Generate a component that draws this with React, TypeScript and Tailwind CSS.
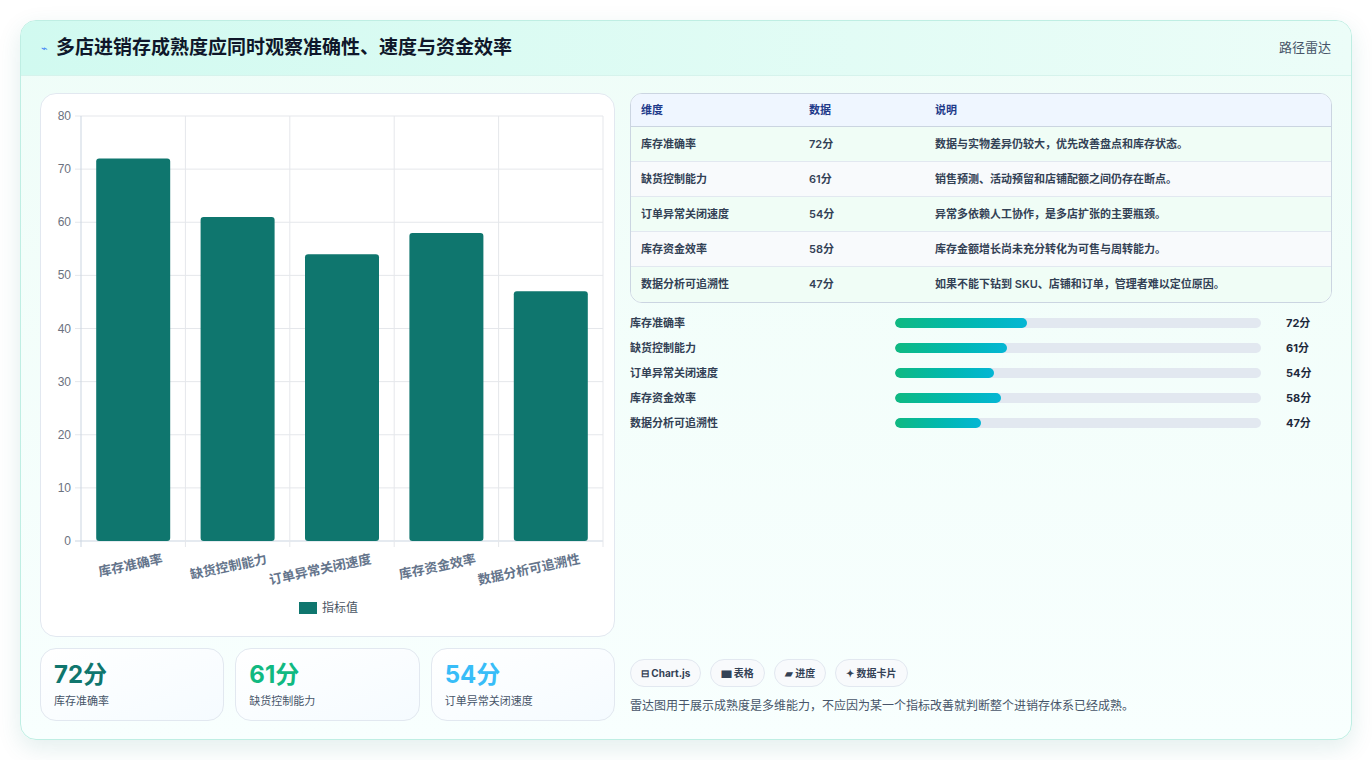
import React from "react";

const data = [
  { n: "库存准确率", v: 72, d: "数据与实物差异仍较大，优先改善盘点和库存状态。" },
  { n: "缺货控制能力", v: 61, d: "销售预测、活动预留和店铺配额之间仍存在断点。" },
  { n: "订单异常关闭速度", v: 54, d: "异常多依赖人工协作，是多店扩张的主要瓶颈。" },
  { n: "库存资金效率", v: 58, d: "库存金额增长尚未充分转化为可售与周转能力。" },
  { n: "数据分析可追溯性", v: 47, d: "如果不能下钻到 SKU、店铺和订单，管理者难以定位原因。" },
];

function Chart() {
  // svg coords relative to card at (40,93); width 574 height 543
  const x0 = 40, x1 = 562, y0 = 447, yTop = 22;
  const h = y0 - yTop;
  const slot = (x1 - x0) / 5;
  return (
    <svg width="574" height="543" className="block">
      {[0, 10, 20, 30, 40, 50, 60, 70, 80].map((t) => {
        const y = y0 - (t / 80) * h;
        return (
          <g key={t}>
            <line x1={x0 - 6} x2={x1} y1={y} y2={y} stroke={t === 0 ? "#cbd5e1" : "#e5e7eb"} />
            <text x={x0 - 10} y={y + 4} textAnchor="end" fontSize="12" fill="#6b7280" fontFamily="Liberation Sans, sans-serif">{t}</text>
          </g>
        );
      })}
      {[0, 1, 2, 3, 4, 5].map((i) => (
        <line key={i} x1={x0 + i * slot} x2={x0 + i * slot} y1={yTop} y2={y0 + 6} stroke={i === 0 ? "#cbd5e1" : "#e5e7eb"} />
      ))}
      {data.map((d, i) => {
        const bh = (d.v / 80) * h;
        const cx = x0 + i * slot + slot / 2;
        return (
          <g key={d.n}>
            <rect x={cx - 37} y={y0 - bh} width={74} height={bh} rx={3} fill="#0f766e" />
            <text transform={`translate(${cx + 30},${y0 + 22}) rotate(-12)`} textAnchor="end" fontSize="13" fontWeight="bold" fill="#64748b" fontFamily="Noto Sans CJK SC, sans-serif">{d.n}</text>
          </g>
        );
      })}
      <rect x={258} y={508} width={18} height={12} fill="#0f766e" />
      <text x={281} y={518} fontSize="12" fill="#4b5563" fontFamily="Noto Sans CJK SC, sans-serif">指标值</text>
    </svg>
  );
}

export default function App() {
  return (
    <div className="w-[1372px] h-[760px] bg-white p-5 pb-5" style={{ fontFamily: "Inter, 'Noto Sans CJK SC', sans-serif" }}>
      <div className="w-[1332px] h-[720px] rounded-2xl border border-[#bfeee3] shadow-[0_8px_24px_rgba(15,118,110,0.12)] overflow-hidden flex flex-col bg-gradient-to-b from-[#effdf8] to-[#f8fffe]">
        <div className="h-[55px] shrink-0 flex items-center justify-between px-5 bg-gradient-to-r from-[#d1faf0] to-[#ecfdf8] border-b border-[#d6f3ec]">
          <div className="flex items-center gap-2">
            <span className="text-[#3b82f6] text-[11px]">⌁</span>
            <span className="text-[19px] font-bold text-[#0f172a]">多店进销存成熟度应同时观察准确性、速度与资金效率</span>
          </div>
          <span className="text-[13px] text-[#475569]">路径雷达</span>
        </div>
        <div className="flex gap-[15px] px-[19px] pt-[17px]">
          <div className="w-[575px] flex flex-col gap-[11px]">
            <div className="h-[544px] rounded-2xl border border-[#e2e8f0] bg-white overflow-hidden">
              <Chart />
            </div>
            <div className="grid grid-cols-3 gap-[11px]">
              {[
                ["72分", "库存准确率", "text-[#0f766e]"],
                ["61分", "缺货控制能力", "text-[#10b981]"],
                ["54分", "订单异常关闭速度", "text-[#38bdf8]"],
              ].map(([v, l, c]) => (
                <div key={l} className="h-[73px] rounded-2xl border border-[#e2e8f0] bg-gradient-to-br from-white to-[#f5fbff] px-[13px] pt-[10px]">
                  <div className={`text-[24px] font-bold leading-[32px] ${c}`}>{v}</div>
                  <div className="text-[11px] text-[#475569] mt-[2px]">{l}</div>
                </div>
              ))}
            </div>
          </div>
          <div className="w-[704px] flex flex-col">
            <div className="rounded-xl border border-[#cbd5e1] overflow-hidden bg-white">
              <div className="grid grid-cols-[168px_126px_1fr] h-[33px] items-center bg-[#eff6ff] border-b border-[#cbd5e1] px-[10px] text-[11px] font-bold text-[#1e3a8a]">
                <span>维度</span><span>数据</span><span>说明</span>
              </div>
              {data.map((d, i) => (
                <div key={d.n} className={`grid grid-cols-[168px_126px_1fr] h-[35px] items-center px-[10px] text-[11px] font-semibold text-[#334155] ${i < 4 ? "border-b border-[#e2e8f0]" : ""} ${i % 2 === 0 ? "bg-[#f0fdf6]" : "bg-[#f8fafc]"}`}>
                  <span>{d.n}</span><span>{d.v}分</span><span>{d.d}</span>
                </div>
              ))}
            </div>
            <div className="flex flex-col gap-[9px] mt-[12px]">
              {data.map((d) => (
                <div key={d.n} className="flex items-center h-[16px] text-[11px] font-semibold text-[#334155]">
                  <span className="w-[265px]">{d.n}</span>
                  <div className="w-[366px] h-[10px] rounded-full bg-[#e2e8f0] overflow-hidden">
                    <div className="h-full rounded-full bg-gradient-to-r from-[#10b981] to-[#06b6d4]" style={{ width: `${d.v / 2}%` }} />
                  </div>
                  <span className="ml-[25px] font-bold text-[#1e293b]">{d.v}分</span>
                </div>
              ))}
            </div>
            <div className="flex gap-[9px] mt-[228px]">
              {["⊟ Chart.js", "▆ 表格", "▰ 进度", "✦ 数据卡片"].map((t) => (
                <span key={t} className="h-[28px] px-[10px] rounded-full border border-[#e2e8f0] bg-[#f8fafc] flex items-center text-[10px] font-bold text-[#334155]">{t}</span>
              ))}
            </div>
            <div className="mt-[10px] text-[12px] text-[#475569]">雷达图用于展示成熟度是多维能力，不应因为某一个指标改善就判断整个进销存体系已经成熟。</div>
          </div>
        </div>
      </div>
    </div>
  );
}
